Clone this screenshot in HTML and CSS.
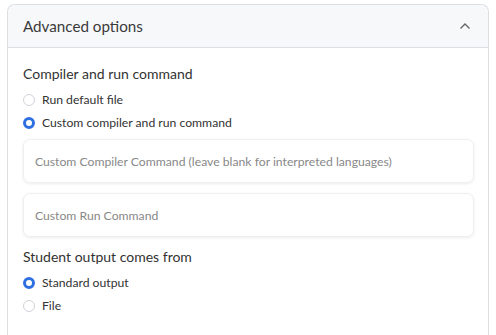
FILE: index.html
```html
<!DOCTYPE html>
<html lang="en">
<head>
    <meta charset="UTF-8">
    <title>Advanced options</title>
    <link rel="stylesheet" href="styles.css">
</head>
<body>
    <div class="card">
        <div class="card-header">
            <span>Advanced options</span>
            <svg class="chevron" width="12" height="8" viewBox="0 0 12 8"><path d="M1.5 6.5 L6 2 L10.5 6.5" fill="none" stroke="#666" stroke-width="1.4"/></svg>
        </div>
        <div class="card-body">
            <div class="group-label">Compiler and run command</div>
            <label class="radio"><span class="dot"></span>Run default file</label>
            <label class="radio"><span class="dot on"></span>Custom compiler and run command</label>

            <div class="field">Custom Compiler Command (leave blank for interpreted languages)</div>
            <div class="field">Custom Run Command</div>

            <div class="group-label">Student output comes from</div>
            <label class="radio"><span class="dot on"></span>Standard output</label>
            <label class="radio"><span class="dot"></span>File</label>
        </div>
    </div>
</body>
</html>
```

FILE: styles.css
```css
body {
    margin: 0;
    padding: 4px 7px 0 7px;
    font-family: Lato, "Noto Sans", sans-serif;
    color: #333;
    background: #fff;
}
.card {
    border: 1px solid #dcdee2;
    border-bottom: none;
    border-radius: 8px 8px 0 0;
    height: 330px;
}
.card-header {
    background-color: #f7f8fa;
    border-bottom: 1px solid #dcdee2;
    border-radius: 8px 8px 0 0;
    height: 42px;
    display: flex;
    align-items: center;
    justify-content: space-between;
    padding: 0 17px 0 15px;
    font-size: 15.2px;
    color: #3a3a3a;
}
.card-body {
    padding: 16px 15px 0 15px;
}
.group-label {
    font-size: 14px;
    color: #333;
    line-height: 20px;
    margin-bottom: 4px;
}
.radio {
    display: flex;
    align-items: center;
    font-size: 12.2px;
    color: #333;
    height: 23px;
}
.dot {
    width: 10px;
    height: 10px;
    border: 1px solid #d0d3d8;
    border-radius: 50%;
    margin-right: 7px;
    box-sizing: content-box;
}
.dot.on {
    width: 6px;
    height: 6px;
    border: 3px solid #2f6fe0;
}
.field {
    margin-top: 5px;
    margin-bottom: 10px;
    height: 44px;
    border: 1px solid #eeeff1;
    border-radius: 7px;
    box-shadow: 0 1px 3px rgba(0, 0, 0, 0.08);
    display: flex;
    align-items: center;
    padding: 0 11px;
    font-size: 12.2px;
    color: #888;
    box-sizing: border-box;
    width: 451px;
}
.field + .field {
    margin-top: 0;
    margin-bottom: 10px;
}
```
